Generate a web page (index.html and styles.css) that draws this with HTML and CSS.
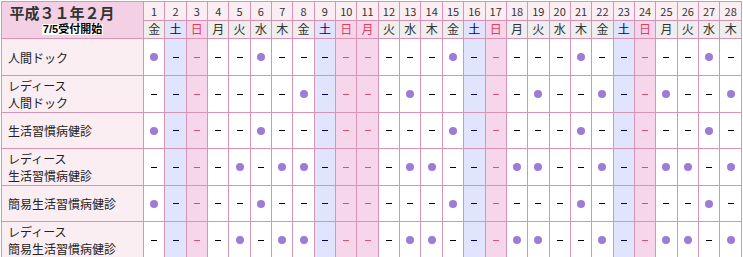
FILE: index.html
```html
<!DOCTYPE html>
<html lang="ja">
<head>
<meta charset="utf-8">
<link rel="stylesheet" href="styles.css">
</head>
<body>
<table class="cal">
<thead>
<tr class="nums">
<th class="title" rowspan="2"><span class="ym">平成３１年２月</span><span class="start">7/5受付開始</span></th>
<th>1</th><th>2</th><th>3</th><th>4</th><th>5</th><th>6</th><th>7</th><th>8</th><th>9</th><th>10</th><th>11</th><th>12</th><th>13</th><th>14</th><th>15</th><th>16</th><th>17</th><th>18</th><th>19</th><th>20</th><th>21</th><th>22</th><th>23</th><th>24</th><th>25</th><th>26</th><th>27</th><th>28</th>
</tr>
<tr class="wds">
<th>金</th><th class="sat">土</th><th class="sun">日</th><th>月</th><th>火</th><th>水</th><th>木</th><th>金</th><th class="sat">土</th><th class="sun">日</th><th class="sun">月</th><th>火</th><th>水</th><th>木</th><th>金</th><th class="sat">土</th><th class="sun">日</th><th>月</th><th>火</th><th>水</th><th>木</th><th>金</th><th class="sat">土</th><th class="sun">日</th><th>月</th><th>火</th><th>水</th><th>木</th>
</tr>
</thead>
<tbody>
<tr>
<th class="label">人間ドック</th>
<td><i class="o"></i></td><td class="sat"><i class="x"></i></td><td class="sun"><i class="x"></i></td><td><i class="x"></i></td><td><i class="x"></i></td><td><i class="o"></i></td><td><i class="x"></i></td><td><i class="x"></i></td><td class="sat"><i class="x"></i></td><td class="sun"><i class="x"></i></td><td class="sun"><i class="x"></i></td><td><i class="x"></i></td><td><i class="x"></i></td><td><i class="x"></i></td><td><i class="o"></i></td><td class="sat"><i class="x"></i></td><td class="sun"><i class="x"></i></td><td><i class="x"></i></td><td><i class="x"></i></td><td><i class="x"></i></td><td><i class="o"></i></td><td><i class="x"></i></td><td class="sat"><i class="x"></i></td><td class="sun"><i class="x"></i></td><td><i class="x"></i></td><td><i class="x"></i></td><td><i class="o"></i></td><td><i class="x"></i></td>
</tr>
<tr>
<th class="label">レディース<br>人間ドック</th>
<td><i class="x"></i></td><td class="sat"><i class="x"></i></td><td class="sun"><i class="x"></i></td><td><i class="x"></i></td><td><i class="x"></i></td><td><i class="x"></i></td><td><i class="x"></i></td><td><i class="o"></i></td><td class="sat"><i class="x"></i></td><td class="sun"><i class="x"></i></td><td class="sun"><i class="x"></i></td><td><i class="x"></i></td><td><i class="o"></i></td><td><i class="x"></i></td><td><i class="x"></i></td><td class="sat"><i class="x"></i></td><td class="sun"><i class="x"></i></td><td><i class="x"></i></td><td><i class="o"></i></td><td><i class="x"></i></td><td><i class="x"></i></td><td><i class="o"></i></td><td class="sat"><i class="x"></i></td><td class="sun"><i class="x"></i></td><td><i class="o"></i></td><td><i class="x"></i></td><td><i class="x"></i></td><td><i class="o"></i></td>
</tr>
<tr>
<th class="label">生活習慣病健診</th>
<td><i class="o"></i></td><td class="sat"><i class="x"></i></td><td class="sun"><i class="x"></i></td><td><i class="x"></i></td><td><i class="x"></i></td><td><i class="o"></i></td><td><i class="x"></i></td><td><i class="x"></i></td><td class="sat"><i class="x"></i></td><td class="sun"><i class="x"></i></td><td class="sun"><i class="x"></i></td><td><i class="x"></i></td><td><i class="x"></i></td><td><i class="x"></i></td><td><i class="o"></i></td><td class="sat"><i class="x"></i></td><td class="sun"><i class="x"></i></td><td><i class="x"></i></td><td><i class="x"></i></td><td><i class="x"></i></td><td><i class="o"></i></td><td><i class="x"></i></td><td class="sat"><i class="x"></i></td><td class="sun"><i class="x"></i></td><td><i class="x"></i></td><td><i class="x"></i></td><td><i class="o"></i></td><td><i class="x"></i></td>
</tr>
<tr>
<th class="label">レディース<br>生活習慣病健診</th>
<td><i class="x"></i></td><td class="sat"><i class="x"></i></td><td class="sun"><i class="x"></i></td><td><i class="x"></i></td><td><i class="o"></i></td><td><i class="x"></i></td><td><i class="o"></i></td><td><i class="o"></i></td><td class="sat"><i class="x"></i></td><td class="sun"><i class="x"></i></td><td class="sun"><i class="x"></i></td><td><i class="x"></i></td><td><i class="o"></i></td><td><i class="o"></i></td><td><i class="x"></i></td><td class="sat"><i class="x"></i></td><td class="sun"><i class="x"></i></td><td><i class="o"></i></td><td><i class="o"></i></td><td><i class="x"></i></td><td><i class="x"></i></td><td><i class="o"></i></td><td class="sat"><i class="x"></i></td><td class="sun"><i class="x"></i></td><td><i class="o"></i></td><td><i class="o"></i></td><td><i class="x"></i></td><td><i class="o"></i></td>
</tr>
<tr>
<th class="label">簡易生活習慣病健診</th>
<td><i class="o"></i></td><td class="sat"><i class="x"></i></td><td class="sun"><i class="x"></i></td><td><i class="x"></i></td><td><i class="x"></i></td><td><i class="o"></i></td><td><i class="x"></i></td><td><i class="x"></i></td><td class="sat"><i class="x"></i></td><td class="sun"><i class="x"></i></td><td class="sun"><i class="x"></i></td><td><i class="x"></i></td><td><i class="x"></i></td><td><i class="x"></i></td><td><i class="o"></i></td><td class="sat"><i class="x"></i></td><td class="sun"><i class="x"></i></td><td><i class="x"></i></td><td><i class="x"></i></td><td><i class="x"></i></td><td><i class="o"></i></td><td><i class="x"></i></td><td class="sat"><i class="x"></i></td><td class="sun"><i class="x"></i></td><td><i class="x"></i></td><td><i class="x"></i></td><td><i class="o"></i></td><td><i class="x"></i></td>
</tr>
<tr>
<th class="label">レディース<br>簡易生活習慣病健診</th>
<td><i class="x"></i></td><td class="sat"><i class="x"></i></td><td class="sun"><i class="x"></i></td><td><i class="x"></i></td><td><i class="o"></i></td><td><i class="x"></i></td><td><i class="o"></i></td><td><i class="o"></i></td><td class="sat"><i class="x"></i></td><td class="sun"><i class="x"></i></td><td class="sun"><i class="x"></i></td><td><i class="x"></i></td><td><i class="o"></i></td><td><i class="o"></i></td><td><i class="x"></i></td><td class="sat"><i class="x"></i></td><td class="sun"><i class="x"></i></td><td><i class="o"></i></td><td><i class="o"></i></td><td><i class="x"></i></td><td><i class="x"></i></td><td><i class="o"></i></td><td class="sat"><i class="x"></i></td><td class="sun"><i class="x"></i></td><td><i class="o"></i></td><td><i class="o"></i></td><td><i class="x"></i></td><td><i class="o"></i></td>
</tr>
</tbody>
</table>
</body>
</html>
```
FILE: styles.css
```css
html, body {
  margin: 0;
  padding: 0;
  background: #ffffff;
}
body {
  padding: 1px 0 0 1px;
  font-family: "Noto Sans CJK JP", "Noto Sans", sans-serif;
  color: #333333;
}
.cal {
  table-layout: fixed;
  width: 741px;
  border-collapse: separate;
  border-spacing: 0;
  border-top: 1px solid #d993b4;
  border-left: 1px solid #d993b4;
}
.cal th,
.cal td {
  padding: 0;
  border-right: 1px solid #d993b4;
  border-bottom: 1px solid #d993b4;
  text-align: center;
  vertical-align: middle;
  font-weight: normal;
}
.cal .title {
  box-sizing: border-box;
  width: 142px;
  background: #f3d0e3;
  vertical-align: top;
  text-align: center;
  font-family: "Liberation Sans", "Noto Sans CJK JP", sans-serif;
}
.ym {
  display: block;
  height: 21px;
  line-height: 21px;
  margin-top: 0;
  padding-right: 21px;
  font-size: 15px;
  font-weight: bold;
  color: #333333;
}
.start {
  display: inline-block;
  height: 11px;
  line-height: 11px;
  margin-top: 0;
  padding: 0 1px;
  background: #ffffff;
  font-size: 11px;
  font-weight: bold;
  color: #000000;
  vertical-align: top;
}
.nums {
  height: 17px;
}
.nums th {
  background: #fbeef3;
  font-size: 11px;
  line-height: 14px;
  padding-top: 1px;
  color: #333333;
}
.wds {
  height: 17px;
}
.wds th {
  background: #eeeeee;
  font-size: 12px;
  line-height: 14px;
  color: #333333;
}
.wds th.sat {
  background: #dfe3fc;
  color: #000080;
}
.wds th.sun {
  background: #f6d5ea;
  color: #e0405e;
}
tbody tr {
  height: 37px;
}
tbody tr:nth-child(3),
tbody tr:nth-child(5) {
  height: 36px;
}
.cal .label {
  background: #fbeef3;
  text-align: left;
  padding-left: 6px;
  font-size: 12px;
  line-height: 17px;
  color: #222222;
}
.cal td {
  background: #ffffff;
}
.cal td.sat {
  background: #e0e4fd;
}
.cal td.sun {
  background: #f6d6eb;
}
.o {
  display: block;
  width: 8px;
  height: 8px;
  margin: 0 auto;
  border-radius: 50%;
  background: #9b7dd9;
}
.x {
  display: block;
  width: 6px;
  height: 1px;
  margin: 0 auto;
  background: #000000;
}
td.sat .x {
  background: #000066;
}
td.sun .x {
  background: #e0506e;
}
```
